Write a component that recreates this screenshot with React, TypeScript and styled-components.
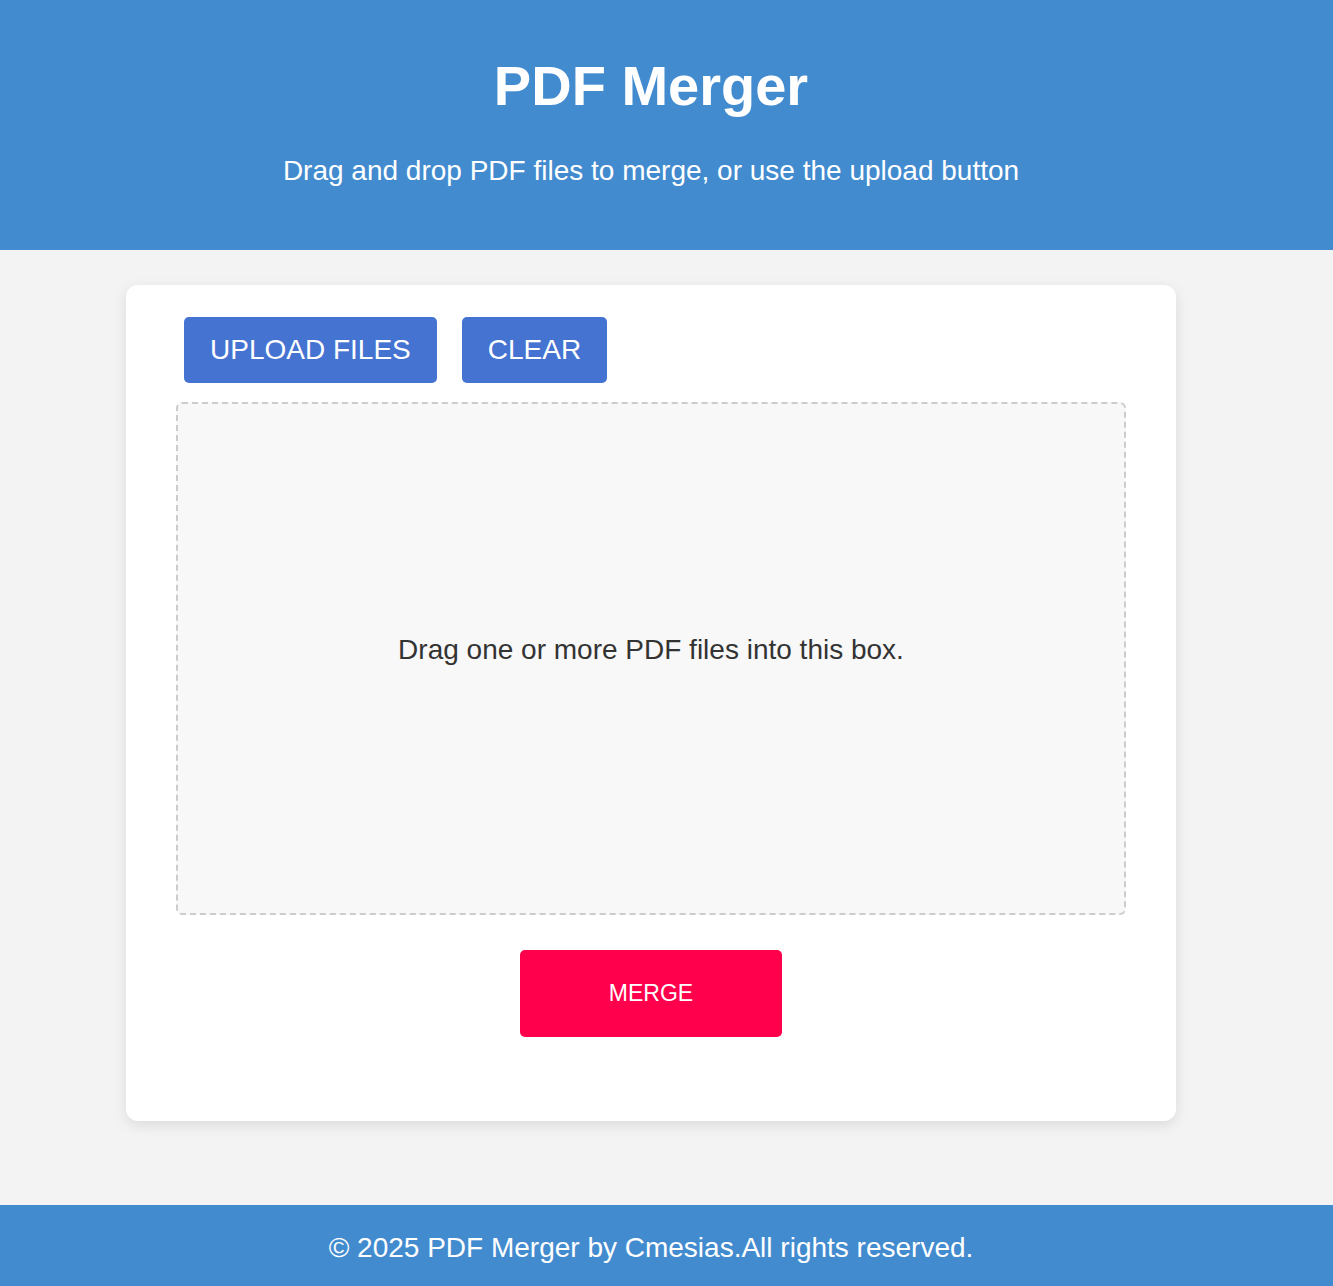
import styled, { createGlobalStyle } from "styled-components";

const GlobalStyle = createGlobalStyle`
  html, body {
    margin: 0;
    padding: 0;
  }

  body {
    background: #f3f3f3;
    font-family: "Liberation Sans", Arial, sans-serif;
  }
`;

export default function App() {
  return (
    <>
      <GlobalStyle />
      <Page>
        <Header>
          <Title>PDF Merger</Title>
          <Subtitle>
            Drag and drop PDF files to merge, or use the upload button
          </Subtitle>
        </Header>

        <Main>
          <Card>
            <Toolbar>
              <ActionButton>UPLOAD FILES</ActionButton>
              <ActionButton>CLEAR</ActionButton>
            </Toolbar>
            <DropZone>
              <DropText>Drag one or more PDF files into this box.</DropText>
            </DropZone>
            <MergeRow>
              <MergeButton>MERGE</MergeButton>
            </MergeRow>
          </Card>
        </Main>

        <Footer>
          <FooterText>© 2025 PDF Merger by Cmesias.All rights reserved.</FooterText>
        </Footer>
      </Page>
    </>
  );
}

const Page = styled.div`
  min-height: 100vh;
  display: flex;
  flex-direction: column;
`;

const Header = styled.header`
  background: #428bcf;
  color: #ffffff;
  height: 250px;
  box-sizing: border-box;
  padding: 53px 31px 0 0;
  text-align: center;
`;

const Title = styled.h1`
  margin: 0 0 37px;
  font-size: 56px;
  font-weight: 700;
`;

const Subtitle = styled.p`
  margin: 0;
  font-size: 28px;
`;

const Main = styled.main`
  flex: 1;
  display: flex;
  justify-content: center;
  padding: 35px 31px 84px 0;
`;

const Card = styled.section`
  width: 1050px;
  box-sizing: border-box;
  background: #ffffff;
  border-radius: 12px;
  box-shadow: 0 4px 14px rgba(0, 0, 0, 0.1);
  padding: 32px 50px 84px;
`;

const Toolbar = styled.div`
  display: flex;
  gap: 25px;
  padding-left: 8px;
  margin-bottom: 19px;
`;

const ActionButton = styled.button`
  height: 66px;
  padding: 0 26px;
  background: #4473d1;
  color: #ffffff;
  border: none;
  border-radius: 5px;
  font-family: inherit;
  font-size: 28px;
  cursor: pointer;
`;

const DropZone = styled.div`
  height: 513px;
  box-sizing: border-box;
  border: 2px dashed #cccccc;
  border-radius: 6px;
  background: #f8f8f8;
  display: flex;
  align-items: center;
  justify-content: center;
  padding-bottom: 18px;
`;

const DropText = styled.p`
  margin: 0;
  font-size: 28px;
  color: #333333;
`;

const MergeRow = styled.div`
  display: flex;
  justify-content: center;
  margin-top: 35px;
`;

const MergeButton = styled.button`
  width: 262px;
  height: 87px;
  background: #ff004d;
  color: #ffffff;
  border: none;
  border-radius: 5px;
  font-family: inherit;
  font-size: 23px;
  cursor: pointer;
`;

const Footer = styled.footer`
  background: #428bcf;
  color: #ffffff;
  height: 81px;
  box-sizing: border-box;
  display: flex;
  align-items: center;
  justify-content: center;
  padding: 4px 31px 0 0;
`;

const FooterText = styled.p`
  margin: 0;
  font-size: 28px;
`;
